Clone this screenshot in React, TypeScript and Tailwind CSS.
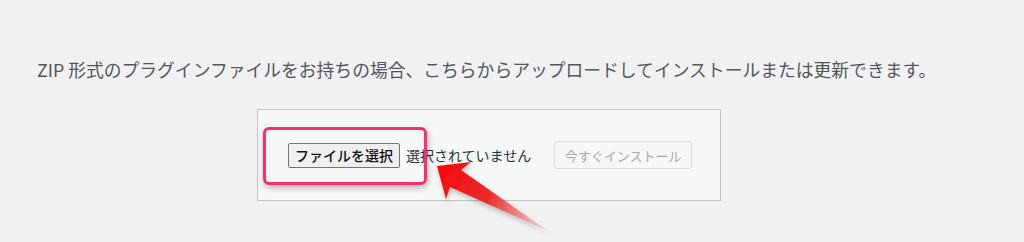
import React from 'react'

const jp = { fontFamily: '"Noto Sans CJK JP", "Noto Sans", sans-serif' }

function PointerArrow() {
  return (
    <svg
      className="pointer-events-none absolute left-0 top-0"
      width="1024"
      height="242"
      viewBox="0 0 1024 242"
    >
      <defs>
        <linearGradient id="arrowFill" x1="440" y1="170" x2="548" y2="231" gradientUnits="userSpaceOnUse">
          <stop offset="0" stopColor="#f20d0d" />
          <stop offset="0.45" stopColor="#ea2a2a" />
          <stop offset="1" stopColor="#f3b5b8" stopOpacity="0.5" />
        </linearGradient>
        <filter id="arrowShadow" x="-20%" y="-20%" width="140%" height="140%">
          <feDropShadow dx="1" dy="3" stdDeviation="2.5" floodColor="#000" floodOpacity="0.25" />
        </filter>
      </defs>
      <polygon
        points="437,166 471,162 461,170 548,231 450,187 446,199"
        fill="url(#arrowFill)"
        filter="url(#arrowShadow)"
      />
    </svg>
  )
}

export default function App() {
  return (
    <div className="relative h-[242px] w-[1024px] overflow-hidden bg-[#f1f1f1]" style={jp}>
      {/* Intro text */}
      <p className="pl-[37px] pt-[56px] text-[17.8px] leading-[26px] text-[#50575e]">
        ZIP 形式のプラグインファイルをお持ちの場合、こちらからアップロードしてインストールまたは更新できます。
      </p>

      {/* Upload box */}
      <div className="relative ml-[257px] mt-[27px] flex h-[92px] w-[464px] items-center border border-[#c3c4c7] bg-[#f6f7f7] pl-[30px]">
        <button className="h-[25px] w-[112px] rounded-[2px] border border-[#767676] bg-[#efefef] text-[14px] font-medium leading-none text-[#111]">
          ファイルを選択
        </button>
        <span className="ml-[6px] text-[14px] text-[#2c3338]">選択されていません</span>
        <button
          disabled
          className="ml-[23px] h-[28px] w-[138px] rounded-[3px] border border-[#dcdcde] bg-[#f6f7f7] text-[13px] leading-none text-[#a7aaad]"
        >
          今すぐインストール
        </button>

        {/* Highlight frame */}
        <div className="pointer-events-none absolute left-[5px] top-[17px] h-[58px] w-[164px] rounded-[6px] border-[3px] border-[#fe2e6e] shadow-[1px_3px_6px_rgba(0,0,0,0.25)]" />
      </div>

      <PointerArrow />
    </div>
  )
}
